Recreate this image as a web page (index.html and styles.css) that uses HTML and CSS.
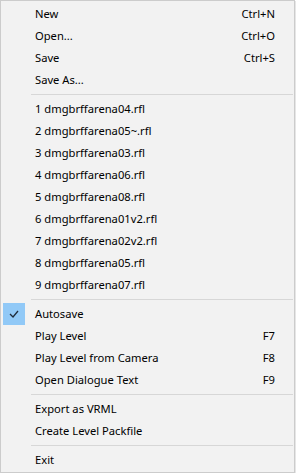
FILE: index.html
```html
<!DOCTYPE html>
<html>
<head>
<meta charset="utf-8">
<link rel="stylesheet" href="styles.css">
</head>
<body>
<div class="menu">
  <div class="item"><span class="gutter"></span><span class="label">New</span><span class="key">Ctrl+N</span></div>
  <div class="item"><span class="gutter"></span><span class="label">Open...</span><span class="key">Ctrl+O</span></div>
  <div class="item"><span class="gutter"></span><span class="label">Save</span><span class="key">Ctrl+S</span></div>
  <div class="item"><span class="gutter"></span><span class="label">Save As...</span></div>
  <div class="sep"></div>
  <div class="item"><span class="gutter"></span><span class="label">1 dmgbrffarena04.rfl</span></div>
  <div class="item"><span class="gutter"></span><span class="label">2 dmgbrffarena05~.rfl</span></div>
  <div class="item"><span class="gutter"></span><span class="label">3 dmgbrffarena03.rfl</span></div>
  <div class="item"><span class="gutter"></span><span class="label">4 dmgbrffarena06.rfl</span></div>
  <div class="item"><span class="gutter"></span><span class="label">5 dmgbrffarena08.rfl</span></div>
  <div class="item"><span class="gutter"></span><span class="label">6 dmgbrffarena01v2.rfl</span></div>
  <div class="item"><span class="gutter"></span><span class="label">7 dmgbrffarena02v2.rfl</span></div>
  <div class="item"><span class="gutter"></span><span class="label">8 dmgbrffarena05.rfl</span></div>
  <div class="item"><span class="gutter"></span><span class="label">9 dmgbrffarena07.rfl</span></div>
  <div class="sep"></div>
  <div class="item"><span class="gutter"><span class="check"><svg width="10" height="8" viewBox="0 0 10 8"><path d="M1 4 L4 7 L9 1" fill="none" stroke="#1f2b3a" stroke-width="1.3"/></svg></span></span><span class="label">Autosave</span></div>
  <div class="item"><span class="gutter"></span><span class="label">Play Level</span><span class="key">F7</span></div>
  <div class="item"><span class="gutter"></span><span class="label">Play Level from Camera</span><span class="key">F8</span></div>
  <div class="item"><span class="gutter"></span><span class="label">Open Dialogue Text</span><span class="key">F9</span></div>
  <div class="sep"></div>
  <div class="item"><span class="gutter"></span><span class="label">Export as VRML</span></div>
  <div class="item"><span class="gutter"></span><span class="label">Create Level Packfile</span></div>
  <div class="sep"></div>
  <div class="item"><span class="gutter"></span><span class="label">Exit</span></div>
</div>
</body>
</html>
```
FILE: styles.css
```css
html, body {
  margin: 0;
  padding: 0;
  background: #ffffff;
}
.menu {
  width: 295px;
  box-sizing: border-box;
  background: #f2f2f2;
  border: 1px solid #cccccc;
  padding: 2px 0 1px 0;
  box-shadow: 1px 1px 0 #e6e6e6;
  font-family: "Noto Sans", sans-serif;
  font-size: 11.2px;
  color: #000;
}
.item {
  display: flex;
  align-items: center;
  height: 22px;
  padding-right: 19px;
}
.gutter {
  width: 34px;
  flex: none;
  display: flex;
  align-items: center;
}
.check {
  margin-left: 2px;
  width: 22px;
  height: 22px;
  background: #91c9f7;
  display: flex;
  align-items: center;
  justify-content: center;
}
.label {
  flex: 1;
  white-space: nowrap;
  margin-top: -1px;
}
.key {
  white-space: nowrap;
  margin-top: -1px;
}
.sep {
  height: 7px;
  display: flex;
  align-items: center;
  padding-left: 30px;
  padding-right: 1px;
}
.sep::before {
  content: "";
  flex: 1;
  height: 1px;
  background: #d7d7d7;
}
```
